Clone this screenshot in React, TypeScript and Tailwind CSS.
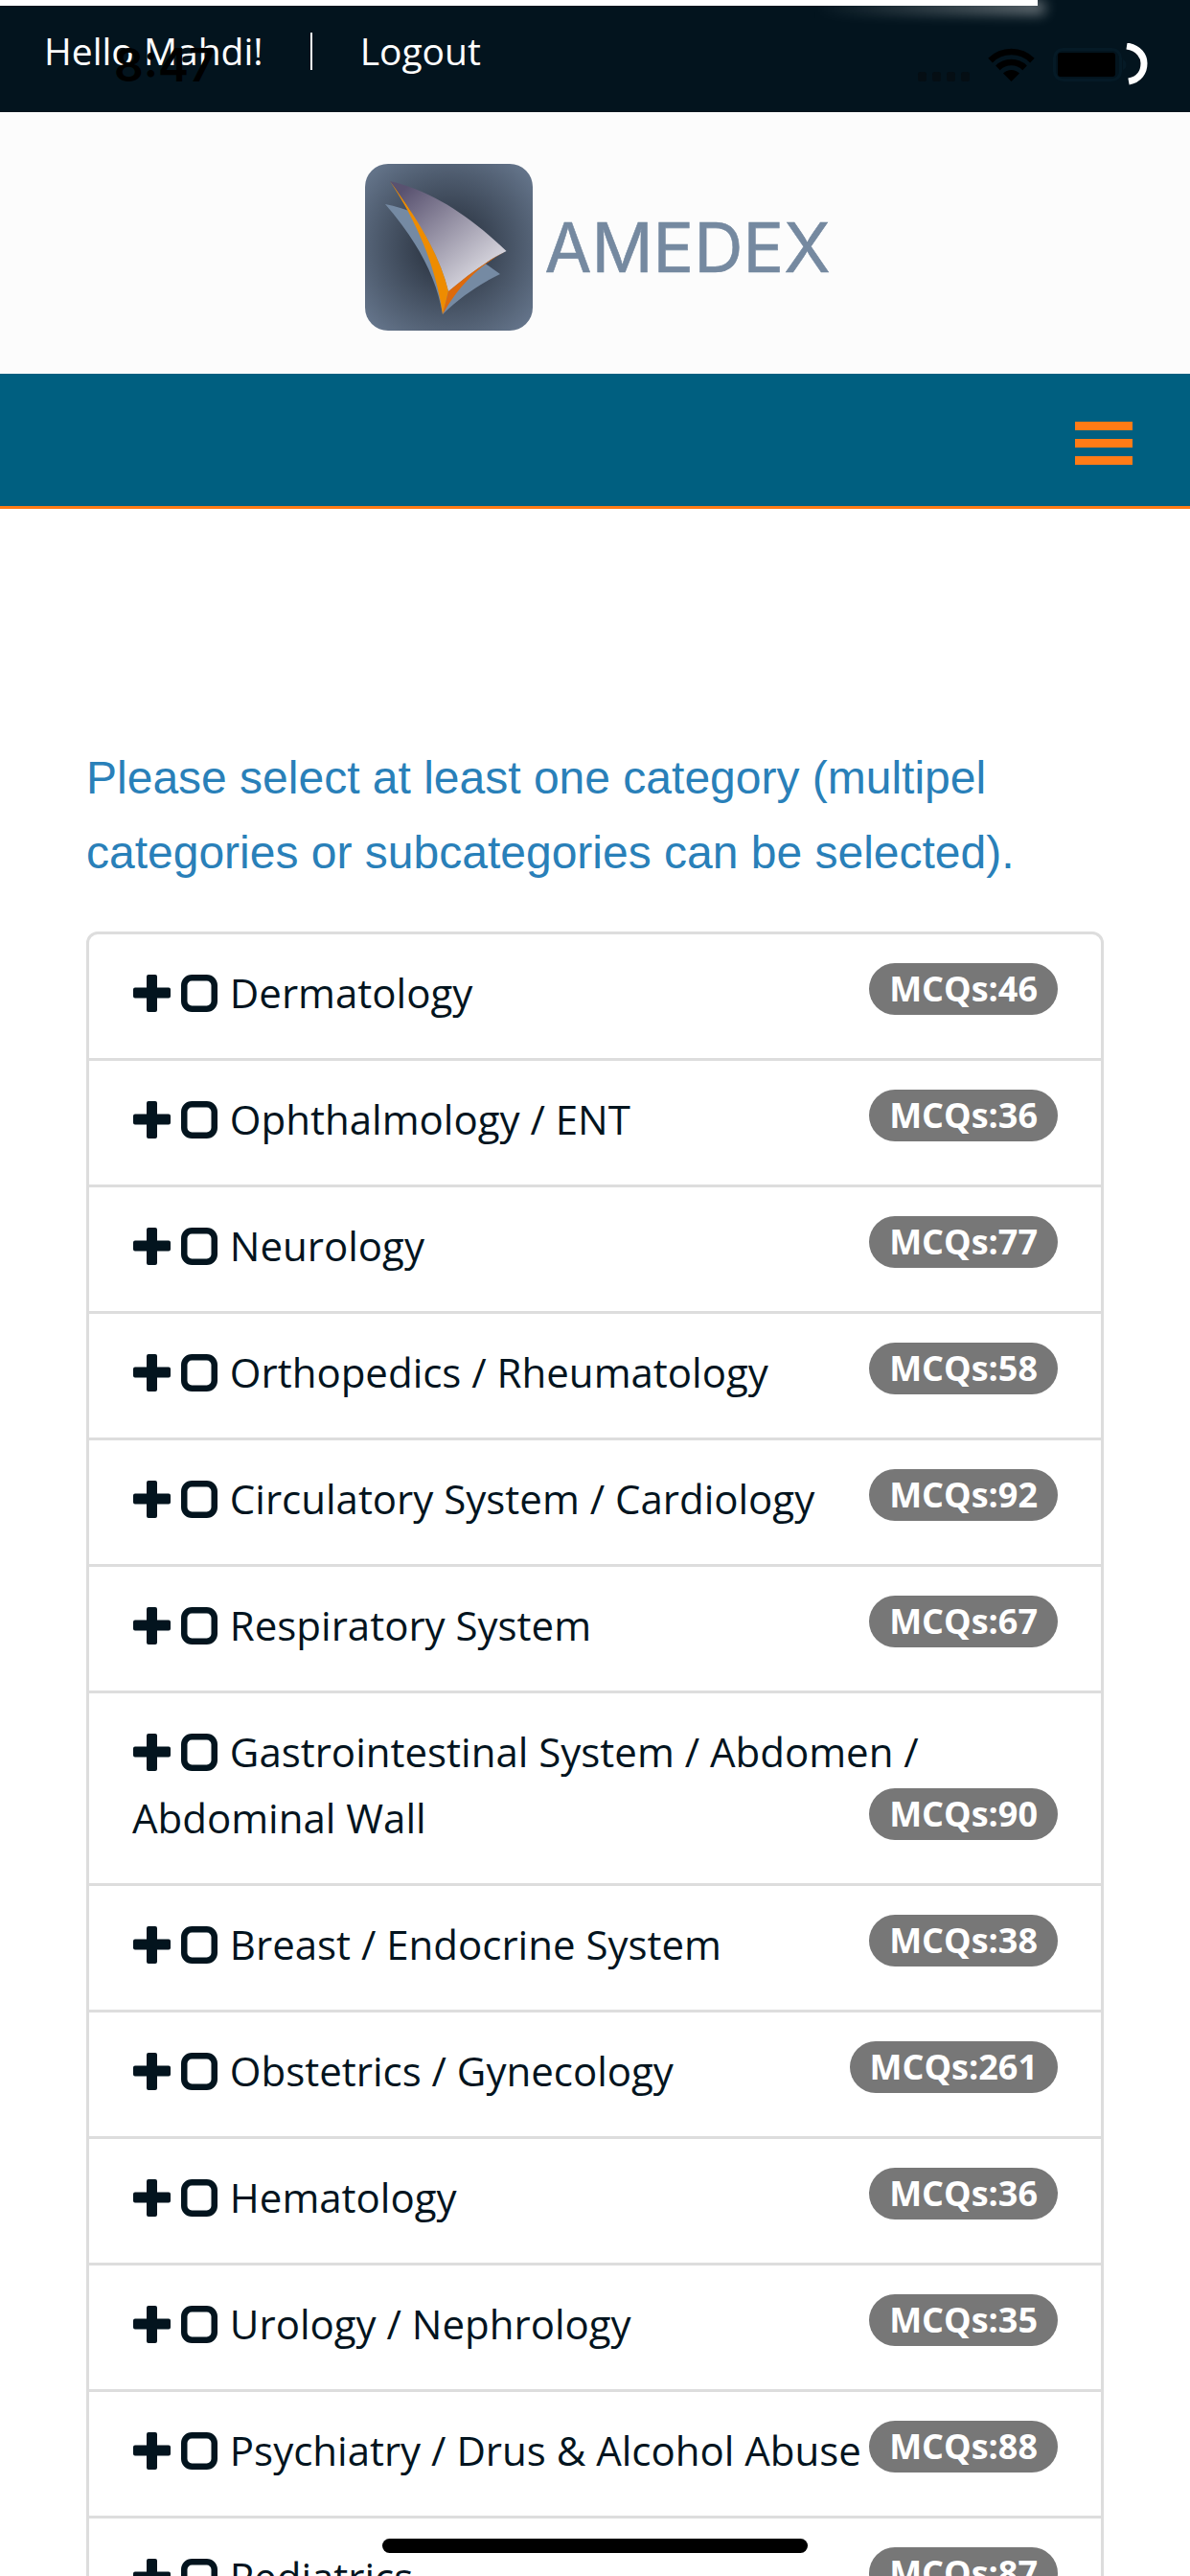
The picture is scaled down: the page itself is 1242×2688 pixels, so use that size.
const rows: [string, number][] = [
  ["Dermatology", 46],
  ["Ophthalmology / ENT", 36],
  ["Neurology", 77],
  ["Orthopedics / Rheumatology", 58],
  ["Circulatory System / Cardiology", 92],
  ["Respiratory System", 67],
  ["Gastrointestinal System / Abdomen / Abdominal Wall", 90],
  ["Breast / Endocrine System", 38],
  ["Obstetrics / Gynecology", 261],
  ["Hematology", 36],
  ["Urology / Nephrology", 35],
  ["Psychiatry / Drus & Alcohol Abuse", 88],
  ["Pediatrics", 87],
];

function PlusIcon() {
  return (
    <svg viewBox="0 0 39 39" className="inline-block ml-[1px] w-[39px] h-[39px] align-[-4px]" fill="#03141e">
      <path d="M16 0h7a2 2 0 0 1 2 2v11.5h12a2 2 0 0 1 2 2v7a2 2 0 0 1-2 2H25V37a2 2 0 0 1-2 2h-7a2 2 0 0 1-2-2V24.500H2a2 2 0 0 1-2-2v-7a2 2 0 0 1 2-2h12V2a2 2 0 0 1 2-2z" />
    </svg>
  );
}

function SquareIcon() {
  return (
    <svg viewBox="0 0 38 39" className="inline-block mr-[2px] w-[38px] h-[39px] align-[-4px]" fill="none" stroke="#03141e" strokeWidth="6.500">
      <rect x="3.250" y="3.250" width="31.500" height="32.500" rx="8" />
    </svg>
  );
}

function Logo() {
  return (
    <div className="flex items-center pl-[6px]">
      <svg viewBox="0 0 175 174" className="w-[175px] h-[174px] rounded-[24px]">
        <defs>
          <radialGradient id="bg" cx="50%" cy="50%" r="72%">
            <stop offset="0%" stopColor="#222a36" />
            <stop offset="100%" stopColor="#6b7c93" />
          </radialGradient>
          <linearGradient id="sail" x1="15%" y1="5%" x2="85%" y2="85%">
            <stop offset="0%" stopColor="#595270" />
            <stop offset="100%" stopColor="#dcdbe2" />
          </linearGradient>
        </defs>
        <rect width="175" height="174" fill="url(#bg)" />
        <path d="M21 42C32 44 42 47 52 52L141 115C120 125 98 140 81 157C74 115 52 78 21 42Z" fill="#758aa3" />
        <path d="M26 18C70 28 110 55 147.500 91C125 102 105 118 87 133C78 95 55 58 26 18Z" fill="url(#sail)" />
        <path d="M26 18C55 58 78 95 87 133L81 157C74 108 55 62 26 18Z" fill="#ee8c00" />
        <path d="M147.500 91C125 102 105 118 87 133L81 157C95 132 115 108 147.500 91Z" fill="#dd6a0c" />
      </svg>
      <span className="ml-[12px] text-[71px] leading-none text-[#7589a0] [-webkit-text-stroke:0.6px_#7589a0] [font-family:Inter,sans-serif]">AMEDEX</span>
    </div>
  );
}

export default function App() {
  return (
    <div className="relative w-[1242px] h-[2688px] overflow-hidden bg-white [font-family:'Open_Sans',sans-serif] text-[#03141e]">
      <div className="h-[117px] bg-[#03141e] flex items-center pl-[46px] pb-[10px] text-[39px] text-white">
        <span>Hello Mahdi!</span>
        <span className="ml-[49px] mr-[50px] w-[2px] h-[39px] bg-white" />
        <span>Logout</span>
      </div>
      <div className="h-[273px] pt-[9px] bg-[#fcfcfc] flex items-center justify-center">
        <Logo />
      </div>
      <div className="h-[141px] bg-[#005f80] border-b-[3px] border-[#ff7b16] flex justify-end pr-[60px] pt-[50px]">
        <div className="flex flex-col gap-[9px]">
          <div className="w-[60px] h-[9px] bg-[#ff7b16]" />
          <div className="w-[60px] h-[9px] bg-[#ff7b16]" />
          <div className="w-[60px] h-[9px] bg-[#ff7b16]" />
        </div>
      </div>
      <div className="px-[90px] pt-[242px]">
        <p className="text-[48px] leading-[78px] text-[#2980b9] [font-family:'Liberation_Sans',sans-serif]">
          Please select at least one category (multipel categories or subcategories can be selected).
        </p>
        <div className="mt-[43px]">
          {rows.map(([name, n], i) => (
            <div
              key={name}
              className={`border-[3px] border-[#dddddd] pt-[26px] pb-[34px] px-[45px] -mb-[3px] text-[42px] leading-[69px] ${i === 0 ? "rounded-t-[12px]" : ""}`}
            >
              <PlusIcon /> <SquareIcon /> {name}
              <span className="float-right mt-[4px] h-[54px] px-[21px] rounded-[30px] bg-[#777777] text-white text-[36px] leading-[54px] font-bold">
                MCQs:{n}
              </span>
            </div>
          ))}
        </div>
      </div>

      {/* phone status bar showing through */}
      <div className="absolute left-[850px] top-[2px] w-[240px] h-[12px] blur-[7px] bg-gradient-to-r from-transparent to-white/50" />
      <div className="absolute top-0 left-0 w-[1083px] h-[6px] bg-white" />
      <span className="absolute left-[119px] top-[39px] text-[48px] leading-[58px] font-semibold text-black [font-family:Inter,sans-serif]">8:47</span>
      <svg viewBox="0 0 240 45" className="absolute left-[958px] top-[45px] w-[240px] h-[45px]">
        <g fill="#050e14">
          <rect x="0" y="30" width="9" height="10" rx="2.500" />
          <rect x="15" y="30" width="9" height="10" rx="2.500" />
          <rect x="30" y="30" width="9" height="10" rx="2.500" />
          <rect x="45" y="30" width="9" height="10" rx="2.500" />
        </g>
        <path d="M89 31.500A12 12 0 0 1 106 31.500L97.500 40Z" fill="#000" />
        <path d="M83.400 25.900A20 20 0 0 1 111.600 25.900" fill="none" stroke="#000" strokeWidth="6.500" />
        <path d="M75.600 18.100A31 31 0 0 1 119.400 18.100" fill="none" stroke="#000" strokeWidth="6.500" />
        <rect x="142.500" y="6.500" width="69" height="32" rx="9" fill="none" stroke="#051a26" strokeWidth="3" />
        <path d="M214 17C216.500 18 217.500 20 217.500 23C217.500 25 216.500 27 214 28Z" fill="#051a26" />
        <rect x="146" y="10" width="60" height="25" rx="3" fill="#000" />
        <path d="M218 3C231 5 236 14 236 21C236 30 231 38 220 40" fill="none" stroke="#fff" strokeWidth="7" />
      </svg>
      <div className="absolute left-[399px] top-[2649px] w-[444px] h-[15px] rounded-full bg-black" />
    </div>
  );
}
